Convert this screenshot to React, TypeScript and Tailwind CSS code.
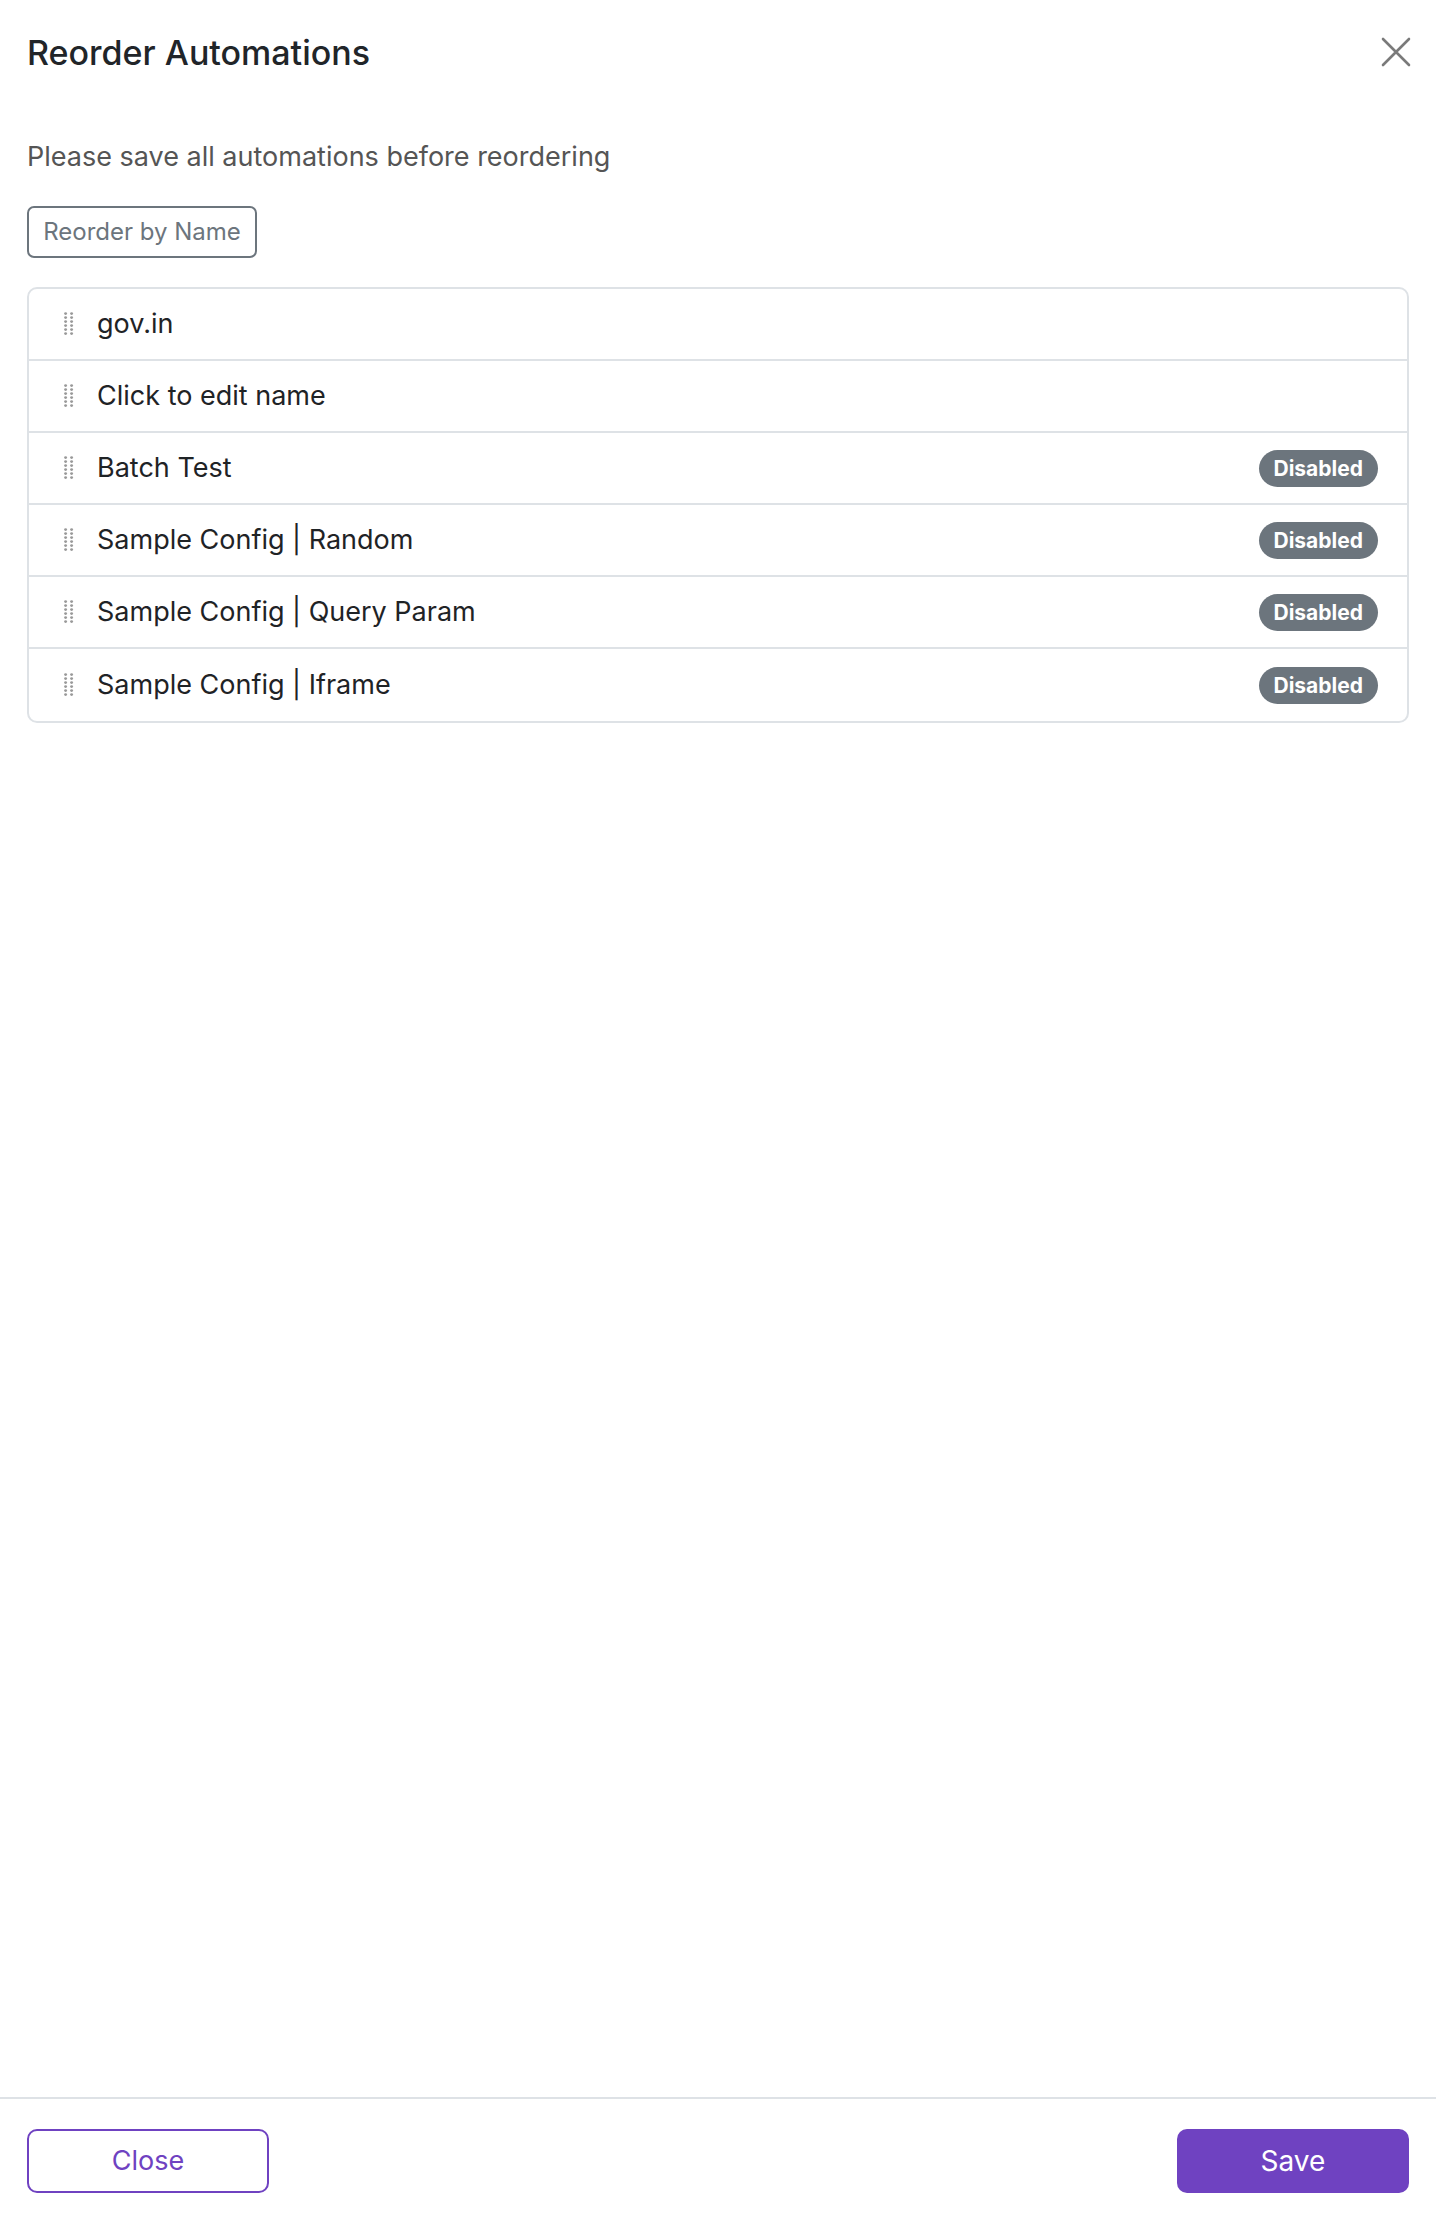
const items = [
  { name: "gov.in", disabled: false },
  { name: "Click to edit name", disabled: false },
  { name: "Batch Test", disabled: true },
  { name: "Sample Config | Random", disabled: true },
  { name: "Sample Config | Query Param", disabled: true },
  { name: "Sample Config | Iframe", disabled: true },
];

const DragHandle = () => {
  const dots = [];
  for (let r = 0; r < 6; r++) {
    for (let c = 0; c < 2; c++) {
      dots.push(<circle key={`${r}-${c}`} cx={1.6 + c * 6} cy={1.6 + r * 4} r={1.45} fill="#999999" />);
    }
  }
  return (
    <svg width="10" height="24" viewBox="0 0 10 24" className="shrink-0">
      {dots}
    </svg>
  );
};

const Row = ({ name, disabled, last }: { name: string; disabled: boolean; last: boolean }) => {
  return (
    <div
      className={`flex items-center h-[72px] pl-[35px] pr-[29px] ${last ? "" : "border-b-2 border-[#dee2e6]"}`}
    >
      <DragHandle />
      <span className="ml-[23px] flex-1 text-[27px] text-[#1f2326]">{name}</span>
      {disabled && (
        <span className="rounded-full bg-[#6c757d] text-white font-bold text-[21px] leading-none px-[15px] py-[8px]">
          Disabled
        </span>
      )}
    </div>
  );
};

export default function App() {
  return (
    <div className="flex flex-col h-[2222px] w-full bg-white font-['Inter',sans-serif]">
      <div className="flex items-center justify-between h-[104px] px-[27px]">
        <h1 className="text-[34px] font-medium text-[#212529]">Reorder Automations</h1>
        <svg width="30" height="30" viewBox="0 0 30 30" className="mr-[-2px]">
          <path d="M2 2 L28 28 M28 2 L2 28" stroke="#7a7a7a" strokeWidth="2.6" strokeLinecap="round" />
        </svg>
      </div>
      <div className="flex flex-col flex-1 px-[27px] pt-[36px]">
        <p className="text-[27px] text-[#555] leading-[34px]">
          Please save all automations before reordering
        </p>
        <div className="mt-[32px]">
          <button className="h-[52px] w-[230px] rounded-[7px] border-2 border-[#6c757d] text-[24px] text-[#6c757d]">
            Reorder by Name
          </button>
        </div>
        <div className="mt-[29px] rounded-[10px] border-2 border-[#dee2e6] overflow-hidden">
          {items.map((item, i) => (
            <Row key={item.name} {...item} last={i === items.length - 1} />
          ))}
        </div>
      </div>
      <div className="flex items-center justify-between border-t-2 border-[#dee2e6] px-[27px] pt-[30px] pb-[29px]">
        <button className="h-[64px] w-[242px] rounded-[10px] border-2 border-[#6f42c1] text-[27px] text-[#6f42c1]">
          Close
        </button>
        <button className="h-[64px] w-[232px] rounded-[10px] bg-[#6f42c1] text-[28px] text-white">
          Save
        </button>
      </div>
    </div>
  );
}
